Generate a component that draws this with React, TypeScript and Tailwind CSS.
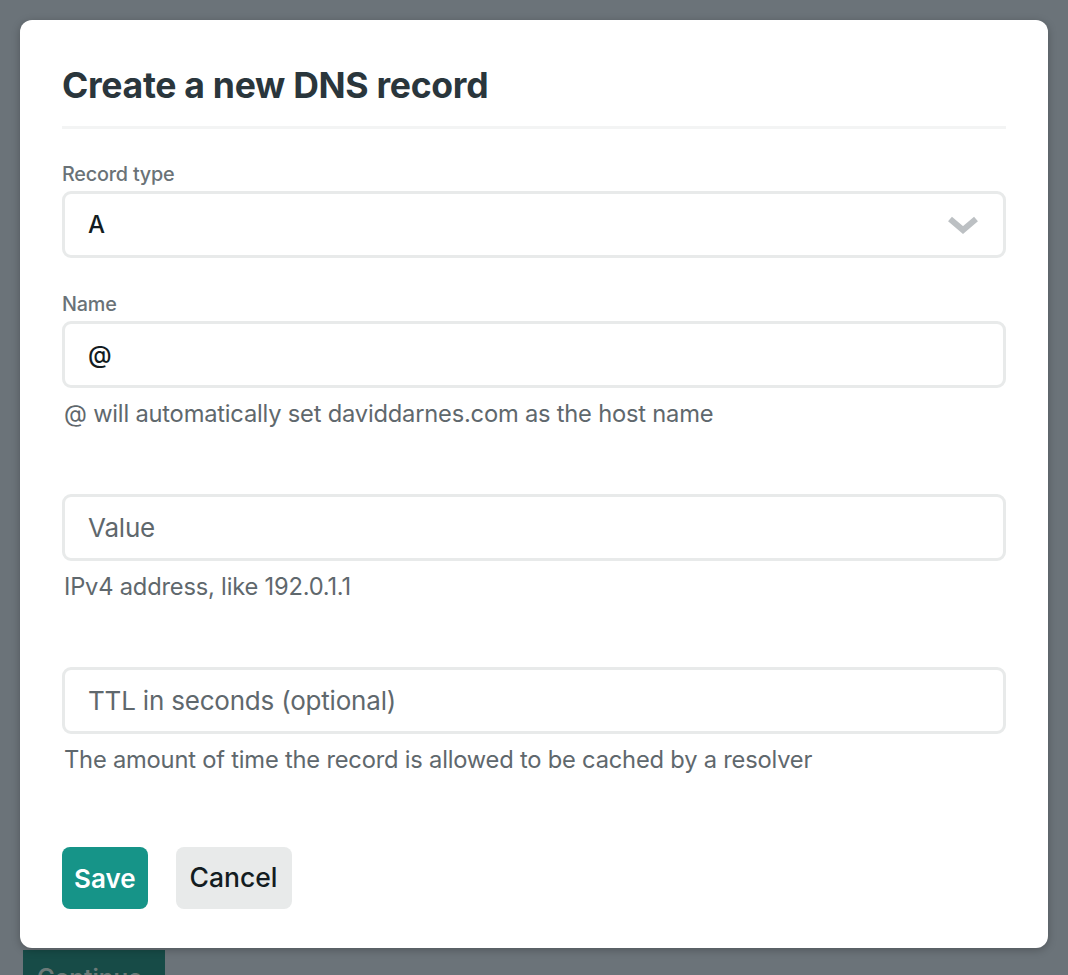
const font = "font-['Inter','Noto_Sans',sans-serif]";

function Field({
  label,
  value,
  placeholder,
  help,
  select,
}: {
  label?: string;
  value?: string;
  placeholder?: string;
  help?: string;
  select?: boolean;
}) {
  return (
    <div className="flex flex-col">
      {label && <label className="mb-[5px] text-[19.8px] font-medium leading-[24px] tracking-[-0.2px] text-[#6a7277]">{label}</label>}
      <div className="flex h-[67px] items-center justify-between rounded-[9px] border-[3px] border-[#e8eaea] bg-white pl-[23px] pr-[26px]">
        {value ? (
          <span className="text-[24px] font-medium text-[#131c21]">{value}</span>
        ) : (
          <span className="text-[26px] font-normal tracking-[-0.2px] text-[#5f686d]">{placeholder}</span>
        )}
        {select && (
          <svg width="32" height="20" viewBox="0 0 32 20" className="mr-[-2px]">
            <path d="M3 4 L16 15 L29 4" fill="none" stroke="#bcc0c3" strokeWidth="6" strokeLinejoin="miter" />
          </svg>
        )}
      </div>
      {help && <p className="ml-[2px] mt-[12px] text-[23.7px] leading-[28px] tracking-[-0.2px] text-[#5f686d]">{help}</p>}
    </div>
  );
}

export default function App() {
  return (
    <div className={`relative h-[975px] w-full overflow-hidden bg-[#6b7379] ${font}`}>
      {/* page content under the overlay */}
      <div className="absolute left-[23px] top-[950px] h-[60px] w-[142px] bg-[#174b47] pl-[14px] pt-[10px] text-[24px] font-semibold text-[#6c7a78]">
        Continue
      </div>

      <div className="relative mx-[20px] mt-[20px] h-[928px] rounded-[12px] bg-white px-[42px] pt-[44px] shadow-[0_2px_8px_rgba(0,0,0,0.25)]">
        <h2 className="text-[35.6px] font-bold leading-[44px] tracking-[-0.3px] text-[#2a363c]">Create a new DNS record</h2>
        <div className="mt-[18px] h-[3px] bg-[#f3f4f4]" />

        <div className="mt-[33px] flex flex-col">
          <Field label="Record type" value="A" select />
          <div className="mt-[34px]">
            <Field label="Name" value="@" help="@ will automatically set daviddarnes.com as the host name" />
          </div>
          <div className="mt-[66px]">
            <Field placeholder="Value" help="IPv4 address, like 192.0.1.1" />
          </div>
          <div className="mt-[66px]">
            <Field placeholder="TTL in seconds (optional)" help="The amount of time the record is allowed to be cached by a resolver" />
          </div>
        </div>

        <div className="mt-[73px] flex gap-[28px]">
          <button className="h-[62px] rounded-[8px] bg-[#169488] px-[12px] text-[26px] font-semibold text-white">Save</button>
          <button className="h-[62px] rounded-[8px] bg-[#e8eaea] px-[14px] text-[26.5px] font-medium text-[#131c21]">Cancel</button>
        </div>
      </div>
    </div>
  );
}
